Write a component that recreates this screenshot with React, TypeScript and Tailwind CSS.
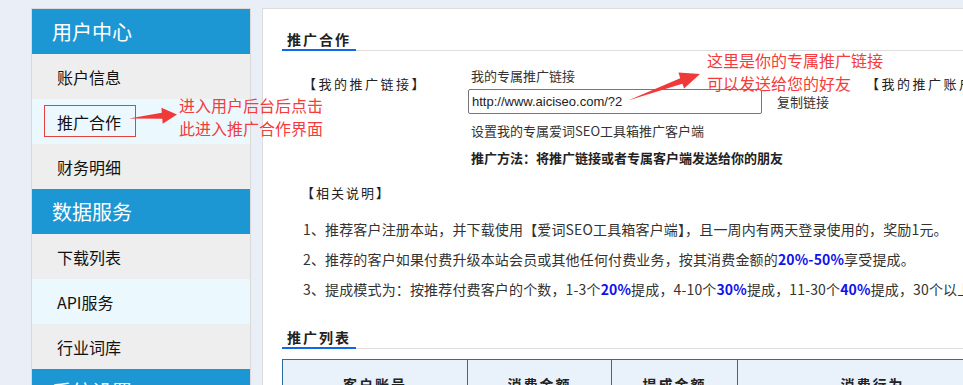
import React from "react";

function SideHeader({ children }: { children: React.ReactNode }) {
  return (
    <div className="h-[45px] flex items-center pl-[20px] bg-[#1c97d4] text-white text-[20px] leading-none">
      {children}
    </div>
  );
}

function SideItem({ children, alt }: { children: React.ReactNode; alt?: boolean }) {
  return (
    <div
      className={
        alt
          ? "h-[45px] flex items-center pl-[25px] text-[16px] leading-none text-[#111] bg-[#ebf8fd]"
          : "h-[45px] flex items-center pl-[25px] text-[16px] leading-none text-[#111] bg-[#eeeeee]"
      }
    >
      {children}
    </div>
  );
}

function SectionTitle({ children }: { children: React.ReactNode }) {
  return (
    <div className="flex">
      <div className="pl-[5px] pr-[5px] leading-[20px] text-[14px] font-bold tracking-[2px] text-[#222] border-b-2 border-[#0f67ea]">
        {children}
      </div>
      <div className="flex-1 border-b border-[#dddddd]" />
    </div>
  );
}

function B({ children }: { children: React.ReactNode }) {
  return <span className="font-bold text-[#1111ee]">{children}</span>;
}

export default function App() {
  return (
    <div className="relative w-[963px] h-[385px] overflow-hidden bg-[#eaeef6] flex items-start pt-[8px] pl-[31px] gap-[11px] font-['Noto_Sans_CJK_SC',sans-serif]">
      {/* Sidebar */}
      <div className="w-[220px] shrink-0 border border-[#d9d9d9] bg-[#eeeeee]">
        <SideHeader>用户中心</SideHeader>
        <SideItem>账户信息</SideItem>
        <SideItem alt>推广合作</SideItem>
        <SideItem>财务明细</SideItem>
        <SideHeader>数据服务</SideHeader>
        <SideItem>下载列表</SideItem>
        <SideItem alt>API服务</SideItem>
        <SideItem>行业词库</SideItem>
        <SideHeader>系统设置</SideHeader>
      </div>

      {/* Content */}
      <div className="w-[900px] h-[600px] shrink-0 bg-white border border-[#dcdcdc] pt-[20px] pl-[19px] text-[#333]">
        <SectionTitle>推广合作</SectionTitle>

        <div className="flex mt-[16px] text-[13px] leading-[18px]">
          <div className="w-[186px] shrink-0 pl-[21px] pt-[8px] tracking-[2.5px] whitespace-nowrap text-[#222]">【我的推广链接】</div>
          <div className="w-[402px] shrink-0">
            <div className="pl-[3px]">我的专属推广链接</div>
            <div className="flex items-center mt-[4px]">
              <input
                className="w-[294px] h-[25px] border border-[#767676] rounded-[2px] px-[3px] text-[13px] font-['Liberation_Sans',sans-serif] text-[#222] outline-none bg-white"
                readOnly
                value="http://www.aiciseo.com/?2"
              />
              <span className="ml-[15px]">复制链接</span>
            </div>
            <div className="mt-[8px] pl-[3px] whitespace-nowrap">设置我的专属爱词SEO工具箱推广客户端</div>
            <div className="mt-[9px] pl-[3px] font-bold whitespace-nowrap text-[#222]">推广方法：将推广链接或者专属客户端发送给你的朋友</div>
          </div>
          <div className="pt-[8px] -ml-[4px] tracking-[2.5px] whitespace-nowrap text-[#222]">【我的推广账户】</div>
        </div>

        <div className="mt-[17px] pl-[19px] text-[13px] leading-[18px] tracking-[2px] text-[#222]">【相关说明】</div>
        <div className="mt-[12px] pl-[21px] text-[14px] leading-[30px] tracking-[0.15px] whitespace-nowrap">
          <div>1、推荐客户注册本站，并下载使用【爱词SEO工具箱客户端】，且一周内有两天登录使用的，奖励1元。</div>
          <div>
            2、推荐的客户如果付费升级本站会员或其他任何付费业务，按其消费金额的<B>20%-50%</B>享受提成。
          </div>
          <div>
            3、提成模式为：按推荐付费客户的个数，1-3个<B>20%</B>提成，4-10个<B>30%</B>提成，11-30个<B>40%</B>提成，30个以上<B>50%</B>提成。
          </div>
        </div>

        <div className="mt-[23px]">
          <SectionTitle>推广列表</SectionTitle>
        </div>

        <div className="mt-[10px] flex h-[50px] bg-[#e9f1fb] border-t border-l border-[#2b6ca3] text-[14px] font-bold tracking-[2px] text-[#222]">
          <div className="w-[185px] shrink-0 border-r border-[#2b6ca3] flex items-center justify-center">客户账号</div>
          <div className="w-[144px] shrink-0 border-r border-[#2b6ca3] flex items-center justify-center">消费金额</div>
          <div className="w-[126px] shrink-0 border-r border-[#2b6ca3] flex items-center justify-center">提成金额</div>
          <div className="w-[270px] shrink-0 border-r border-[#2b6ca3] flex items-center justify-center">消费行为</div>
          <div className="flex-1 flex items-center justify-center">时间</div>
        </div>
      </div>

      {/* Annotations */}
      <div className="absolute left-[44px] top-[105px] w-[92px] h-[32px] border border-[#e8413d]" />
      <div className="absolute left-[179px] top-[94px] text-[16px] leading-[23px] text-[#f53b3b] whitespace-nowrap">
        进入用户后台后点击
        <br />
        此进入推广合作界面
      </div>
      <div className="absolute left-[707px] top-[49px] text-[16px] leading-[23px] text-[#f53b3b] whitespace-nowrap">
        这里是你的专属推广链接
        <br />
        可以发送给您的好友
      </div>
      <svg className="absolute left-0 top-0 pointer-events-none" width={963} height={385} viewBox="0 0 963 385">
        <polygon
          fill="#f03a3a"
          points="129,118.5 161.8,112.8 161.4,107.8 177,114.5 162.7,123.7 162.3,118.7"
        />
        <polygon
          fill="#f03a3a"
          points="628,100.5 680.2,78.2 678.5,72.5 700,74 684.1,88.5 682.4,83.8"
        />
      </svg>
    </div>
  );
}
